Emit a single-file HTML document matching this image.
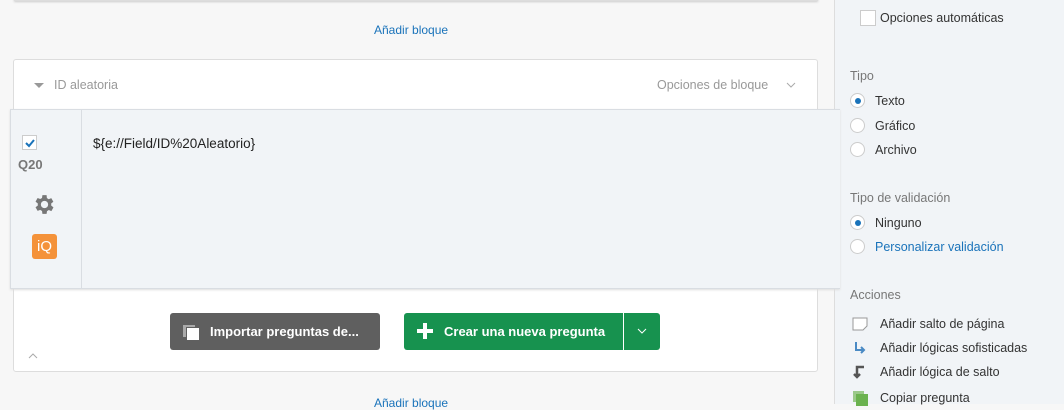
<!DOCTYPE html>
<html><head><style>
*{margin:0;padding:0;box-sizing:border-box}
body{width:1064px;height:404px;overflow:hidden;background:#f7f7f7;font-family:"Liberation Sans",sans-serif;position:relative;font-size:13px;color:#333}
.a{position:absolute}
.link{color:#1a73ba;font-size:12px}
.rp{left:834px;top:0;width:230px;height:404px;background:#f1f4f7;border-left:1px solid #ddd}
.lab{color:#777;font-size:12.5px;position:absolute;left:16px}
.opt{position:absolute;left:16px;font-size:12.5px;color:#333;display:flex;align-items:center}
.rad{width:15px;height:15px;border-radius:50%;border:1px solid #ccc;background:#fff;margin-right:10px;position:relative}
.rad.on::after{content:"";position:absolute;left:3.5px;top:3.5px;width:6px;height:6px;border-radius:50%;background:#1a73ba}
.act{position:absolute;left:18px;font-size:12.5px;display:flex;align-items:center}
</style></head><body>
<div class="a" style="left:14px;top:-5px;width:804px;height:6px;background:#fff;border:1px solid #ddd;box-shadow:0 1px 2px #ccc"></div>
<div class="a link" style="left:374px;top:23px">Añadir bloque</div>
<div class="a" style="left:13px;top:59px;width:805px;height:313px;background:#fff;border:1px solid #ddd;border-radius:3px"></div>
<div class="a" style="left:34px;top:83px;width:0;height:0;border-left:5px solid transparent;border-right:5px solid transparent;border-top:5px solid #999"></div>
<div class="a" style="left:54px;top:78px;color:#999;font-size:12.5px">ID aleatoria</div>
<div class="a" style="left:657px;top:78px;color:#999;font-size:12.5px">Opciones de bloque</div>
<svg class="a" style="left:786px;top:81px" width="10" height="8"><path d="M1 2l4 4 4-4" stroke="#aaa" fill="none"/></svg>
<div class="rp a"></div>
<div class="a" style="left:10px;top:109px;width:830px;height:180px;background:#f1f4f7;border:1px solid #d9dde2;border-right:none;box-shadow:0 1px 2px #ddd"></div>
<div class="a" style="left:81px;top:110px;width:1px;height:178px;background:#d9dde2"></div>
<div class="a" style="left:22px;top:135px;width:15px;height:15px;background:#fff;border:1px solid #ccc"></div>
<svg class="a" style="left:23px;top:136px" width="13" height="13"><path d="M3 7l3 3 5-6" stroke="#1a73ba" stroke-width="2" fill="none"/></svg>
<div class="a" style="left:18px;top:157px;color:#777;font-weight:bold;font-size:13px">Q20</div>
<svg class="a" style="left:32px;top:192px" width="25" height="25" viewBox="0 0 24 24"><path fill="#777" d="M19.4 13a7.5 7.5 0 000-2l2.1-1.6-2-3.5-2.5 1a7 7 0 00-1.7-1L15 3h-4l-.4 2.7a7 7 0 00-1.7 1l-2.5-1-2 3.5L6.6 11a7.5 7.5 0 000 2l-2.2 1.6 2 3.5 2.5-1a7 7 0 001.7 1L11 21h4l.4-2.7a7 7 0 001.7-1l2.5 1 2-3.5zM13 15.5a3.5 3.5 0 110-7 3.5 3.5 0 010 7z" transform="translate(-1 0)"/></svg>
<div class="a" style="left:32px;top:234px;width:25px;height:25px;background:#f4923a;border-radius:3px;color:#fff;font-size:15px;text-align:center;line-height:25px">iQ</div>
<div class="a" style="left:93px;top:136px;font-size:13.5px;color:#222">${e://Field/ID%20Aleatorio}</div>
<div class="a" style="left:170px;top:313px;width:210px;height:37px;background:#5f5f5f;border-radius:3px;color:#fff;font-size:13px;font-weight:bold;line-height:37px;padding-left:40px">Importar preguntas de...</div>
<div class="a" style="left:183px;top:325px;width:12px;height:12px;background:#aaa"></div>
<div class="a" style="left:186px;top:327px;width:13px;height:13px;background:#fff;border-left:1px solid #5f5f5f;border-top:1px solid #5f5f5f"></div>
<div class="a" style="left:404px;top:313px;width:256px;height:37px;background:#17924f;border-radius:3px;color:#fff;font-size:13px;font-weight:bold;line-height:37px;padding-left:40px">Crear una nueva pregunta</div>
<div class="a" style="left:417px;top:329px;width:16px;height:4px;background:#fff"></div>
<div class="a" style="left:423px;top:323px;width:4px;height:16px;background:#fff"></div>
<div class="a" style="left:623px;top:313px;width:1px;height:37px;background:#fff"></div>
<svg class="a" style="left:637px;top:327px" width="10" height="8"><path d="M1 2l4 4 4-4" stroke="#fff" fill="none"/></svg>
<svg class="a" style="left:28px;top:352px" width="10" height="8"><path d="M1 6l4-4 4 4" stroke="#aaa" fill="none"/></svg>
<div class="a link" style="left:374px;top:396px">Añadir bloque</div>
<div class="a" style="left:834px;top:0;width:230px;height:404px">
<div class="a" style="left:26px;top:10px;width:16px;height:16px;background:#fff;border:1px solid #ccc"></div>
<div class="a" style="left:46px;top:11px;font-size:12.5px">Opciones automáticas</div>
<div class="lab" style="top:69px">Tipo</div>
<div class="opt" style="top:93px"><span class="rad on"></span>Texto</div>
<div class="opt" style="top:118px"><span class="rad"></span>Gráfico</div>
<div class="opt" style="top:142px"><span class="rad"></span>Archivo</div>
<div class="lab" style="top:191px">Tipo de validación</div>
<div class="opt" style="top:215px"><span class="rad on"></span>Ninguno</div>
<div class="opt" style="top:239px"><span class="rad"></span><span style="color:#1a73ba">Personalizar validación</span></div>
<div class="lab" style="top:288px">Acciones</div>
<div class="act" style="top:317px"><svg width="16" height="14" style="margin-right:12px"><path d="M1 1h14v8l-4 4H1z" fill="#fff" stroke="#999"/></svg>Añadir salto de página</div>
<div class="act" style="top:341px"><svg width="16" height="14" style="margin-right:12px"><path d="M4 1v8h8M9 6l3 3-3 3" stroke="#4a8ac4" stroke-width="2" fill="none"/></svg>Añadir lógicas sofisticadas</div>
<div class="act" style="top:365px"><svg width="16" height="14" style="margin-right:12px"><path d="M12 2H5v9M2 9l3 3 3-3" stroke="#555" stroke-width="2.5" fill="none"/></svg>Añadir lógica de salto</div>
<div class="act" style="top:390px"><svg width="16" height="16" style="margin-right:12px"><rect x="1" y="1" width="11" height="11" fill="#9bc98a"/><rect x="4" y="4" width="12" height="12" fill="#6bb24f"/></svg>Copiar pregunta</div>
</div>
</body></html>
